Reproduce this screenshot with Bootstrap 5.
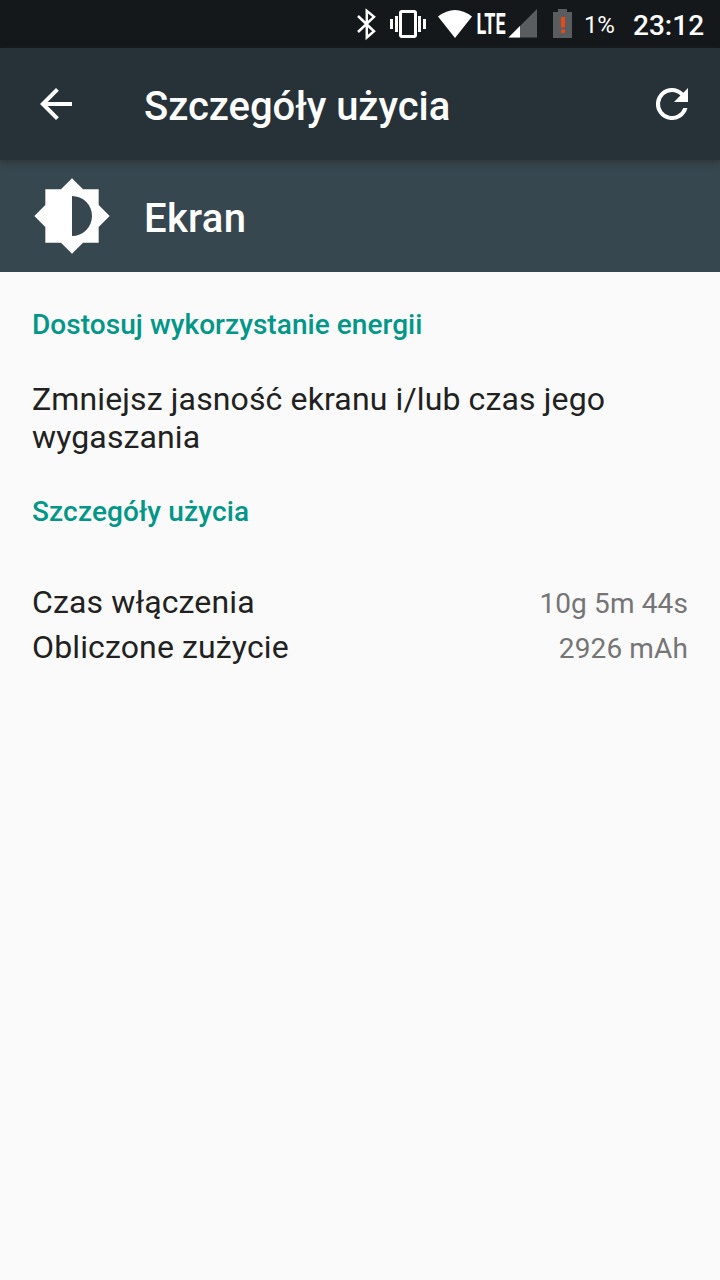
<!DOCTYPE html>
<html lang="pl">
<head>
<meta charset="utf-8">
<meta name="viewport" content="width=device-width, initial-scale=1">
<title>Szczegóły użycia</title>
<link href="https://cdn.jsdelivr.net/npm/bootstrap@5.3.0/dist/css/bootstrap.min.css" rel="stylesheet">
<style>
  body { font-family: Roboto, sans-serif; background: #fafafa; color: #212121; min-height: 1280px; font-size: 32px; line-height: 38px; letter-spacing: .13px; }
  svg { display: block; flex: none; }
  .status-bar { height: 48px; background: #14181b; color: #fff; letter-spacing: 0; }
  .status-icons { width: 222px; height: 48px; }
  .percent { font-size: 24px; line-height: 48px; width: 32px; margin-left: 8px; padding-top: 1px; letter-spacing: -.3px; }
  .clock { font-size: 28px; line-height: 48px; font-weight: 500; width: 71px; margin-left: 17px; padding-top: 2px; }
  .app-bar { height: 112px; background: #263238; box-shadow: 0 2px 7px rgba(40,40,40,.65); z-index: 1; padding: 0 24px 0 32px; }
  .entry-bar { height: 112px; background: #37474f; padding: 0 32px; }
  .heading { font-size: 40px; line-height: 48px; font-weight: 500; color: #fff; }
  .app-bar .heading { margin-left: 64px; padding-top: 6px; letter-spacing: -.05px; }
  .entry-bar .heading { margin-left: 32px; padding-top: 6px; letter-spacing: .3px; }
  .section-title { font-size: 28px; line-height: 34px; font-weight: 500; color: #009688; letter-spacing: .05px; }
  .usage-title { letter-spacing: .15px; }
  main { padding: 36px 32px 0; }
  .tip { padding: 38px 0 39px; }
  .stats { padding-top: 52px; }
  .stat { height: 45px; }
  .caption-text { padding-bottom: 4px; }
  .amount { font-size: 28px; color: #757575; }
</style>
</head>
<body>
<div class="status-bar d-flex justify-content-end">
  <svg class="status-icons" viewBox="354 0 222 48" fill="#fff" aria-hidden="true">
    <path d="M358 16L374 31.300L366.800 37.500V10.800L374 16.800L358 32" fill="none" stroke="#fff" stroke-width="2.500"/>
    <rect x="400.500" y="11.500" width="15" height="25" rx="1.500" fill="none" stroke="#fff" stroke-width="3"/>
    <path d="M390 19h3v10h-3zM395 16h3v16h-3zM418 16h3v16h-3zM423 19h3v10h-3z"/>
    <path d="M438 16.500Q455 3.500 472 16.500L455 38z"/>
    <text x="476.500" y="34" font-family="Roboto, sans-serif" font-size="29.500" font-weight="700" textLength="29" lengthAdjust="spacingAndGlyphs">LTE</text>
    <path d="M537 9v28.500h-28.500z" fill="#5a5d5f"/>
    <path d="M520 26v11.500h-11.500z"/>
    <path d="M553 12h5V9h9v3h5v26h-19z" fill="#5a5d5f"/>
    <path d="M561 17h4v10.500h-4zM561 29.500h4v3.500h-4z" fill="#e64a19"/>
  </svg>
  <div class="percent">1%</div>
  <div class="clock">23:12</div>
  <div class="pe-3"></div>
</div>

<header class="app-bar position-relative d-flex align-items-center">
  <svg width="48" height="48" viewBox="0 0 24 24" fill="#fff" role="img" aria-label="Wstecz"><path d="M20 11H7.830l5.590-5.590L12 4l-8 8 8 8 1.410-1.410L7.830 13H20z"/></svg>
  <h1 class="heading mb-0 me-auto">Szczegóły użycia</h1>
  <svg width="48" height="48" viewBox="0 0 24 24" fill="#fff" role="img" aria-label="Odśwież"><path d="M17.650 6.350A7.960 7.960 0 0 0 12 4a8 8 0 1 0 7.730 10h-2.080A6 6 0 1 1 12 6c1.660 0 3.140.69 4.220 1.780L13 11h7V4z"/></svg>
</header>

<div class="entry-bar d-flex align-items-center">
  <svg width="80" height="80" viewBox="0 0 24 24" fill="#fff" aria-hidden="true"><path d="M20 15.310L23.310 12 20 8.690V4h-4.690L12 .69 8.690 4H4v4.690L.69 12 4 15.310V20h4.690L12 23.310 15.310 20H20zM12 18V6a6 6 0 0 1 0 12z"/></svg>
  <h2 class="heading mb-0">Ekran</h2>
</div>

<main>
  <h3 class="section-title mb-0">Dostosuj wykorzystanie energii</h3>
  <p class="tip mb-0">Zmniejsz jasność ekranu i/lub czas jego wygaszania</p>
  <h3 class="section-title usage-title mb-0">Szczegóły użycia</h3>
  <div class="stats">
    <div class="stat d-flex justify-content-between align-items-center"><span class="caption-text">Czas włączenia</span><span class="amount">10g 5m 44s</span></div>
    <div class="stat d-flex justify-content-between align-items-center"><span class="caption-text">Obliczone zużycie</span><span class="amount">2926 mAh</span></div>
  </div>
</main>
<script src="https://cdn.jsdelivr.net/npm/bootstrap@5.3.0/dist/js/bootstrap.bundle.min.js"></script>
</body>
</html>
